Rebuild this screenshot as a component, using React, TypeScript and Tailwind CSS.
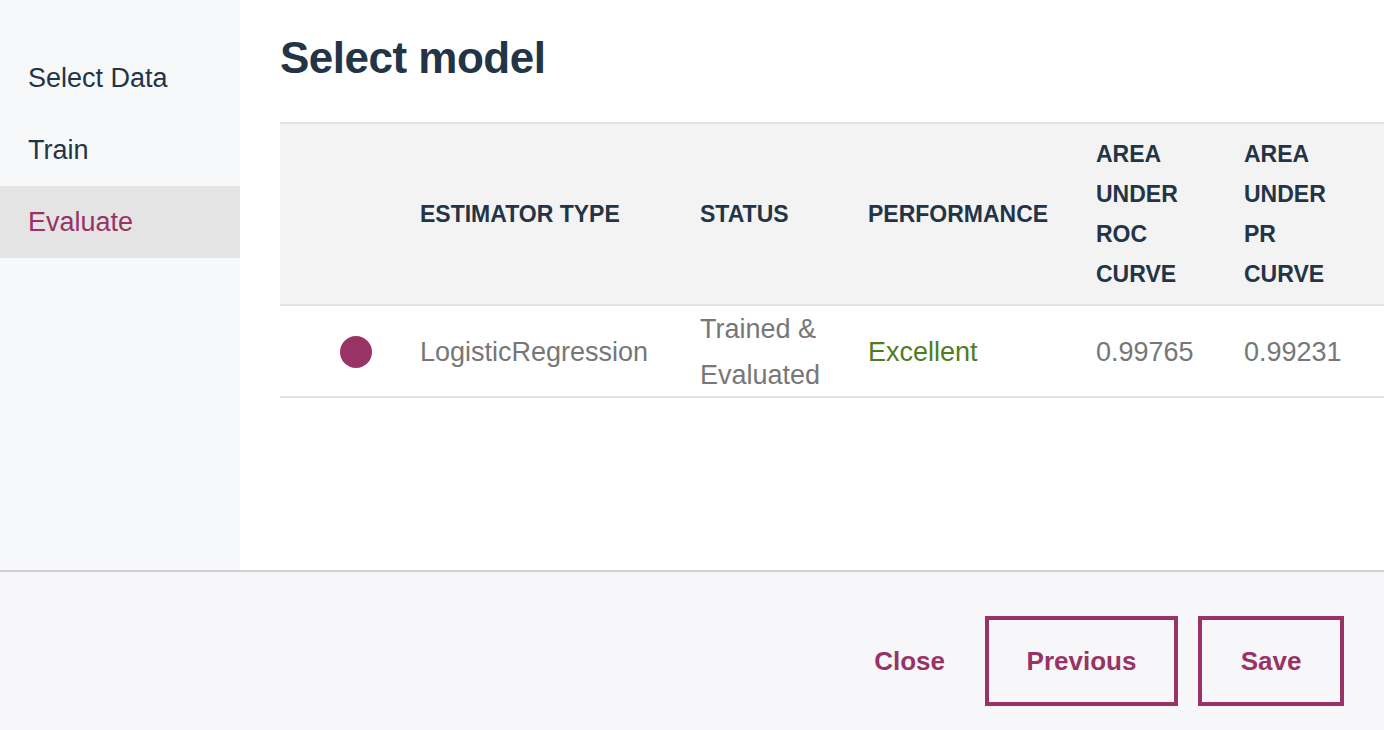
import { useState } from "react";

const steps = ["Select Data", "Train", "Evaluate"];

const headers = [
  { key: "dot", lines: [] as string[] },
  { key: "type", lines: ["ESTIMATOR TYPE"] },
  { key: "status", lines: ["STATUS"] },
  { key: "perf", lines: ["PERFORMANCE"] },
  { key: "roc", lines: ["AREA", "UNDER", "ROC", "CURVE"] },
  { key: "pr", lines: ["AREA", "UNDER", "PR", "CURVE"] },
];

const cols = "grid grid-cols-[140px_280px_168px_228px_148px_1fr]";

export default function App() {
  const [active, setActive] = useState(2);

  return (
    <div className="flex h-[730px] w-[1384px] flex-col overflow-hidden bg-white font-['Liberation_Sans',Arial,sans-serif]">
      <div className="flex h-[570px] shrink-0">
        {/* Sidebar */}
        <nav className="w-[240px] shrink-0 bg-[#f7f8fa] pt-[42px]">
          {steps.map((s, i) => (
            <button
              key={s}
              onClick={() => setActive(i)}
              className={`flex h-[72px] w-full items-center pl-[28px] text-left text-[27px] ${
                active === i ? "bg-[#e4e4e4] text-[#993366]" : "text-[#233447]"
              }`}
            >
              {s}
            </button>
          ))}
        </nav>

        {/* Main */}
        <main className="flex-1 pl-[40px] pt-[34px]">
          <h1 className="mb-[40px] text-[44px] leading-[48px] font-bold tracking-[-0.5px] text-[#233447]">
            Select model
          </h1>

          <div className="border-t-2 border-[#e2e2e2]">
            <div className={`${cols} h-[180px] items-center bg-[#f3f3f3] text-[23px] leading-[40px] font-bold text-[#233447]`}>
              {headers.map((h) => (
                <div key={h.key}>
                  {h.lines.map((l) => (
                    <div key={l}>{l}</div>
                  ))}
                </div>
              ))}
            </div>
            <div className={`${cols} h-[94px] items-center border-y-2 border-[#e2e2e2] text-[27px] leading-[46px] text-[#777777]`}>
              <div className="pl-[60px]">
                <div className="h-[32px] w-[32px] rounded-full bg-[#993366]" />
              </div>
              <div>LogisticRegression</div>
              <div>
                <div>Trained &amp;</div>
                <div>Evaluated</div>
              </div>
              <div className="text-[#4e7d1e]">Excellent</div>
              <div>0.99765</div>
              <div>0.99231</div>
            </div>
          </div>
        </main>
      </div>

      {/* Footer */}
      <footer className="flex flex-1 items-start justify-end gap-[20px] border-t-2 border-[#d0d0d0] bg-[#f7f7f9] pr-[40px] pt-[44px]">
        <button className="mr-[20px] h-[90px] text-[26px] font-bold text-[#993366]">Close</button>
        <button className="h-[90px] w-[193px] border-4 border-[#993366] text-[26px] font-bold text-[#993366]">
          Previous
        </button>
        <button className="h-[90px] w-[146px] border-4 border-[#993366] text-[26px] font-bold text-[#993366]">
          Save
        </button>
      </footer>
    </div>
  );
}
